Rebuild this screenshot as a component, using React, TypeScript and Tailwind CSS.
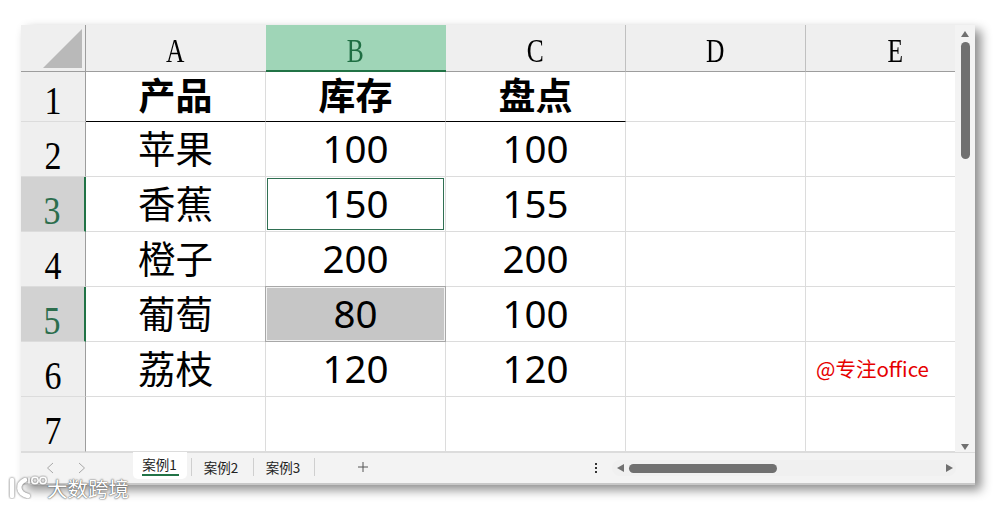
import React from "react";

const cjk = "font-['Noto_Sans_CJK_SC','Noto_Sans',sans-serif]";
const num = "font-['Noto_Sans','Noto_Sans_CJK_SC',sans-serif]";
const serif = "font-['Liberation_Serif','Noto_Serif',serif]";

const cols = ["A", "B", "C", "D", "E"];
const rows: string[][] = [
  ["产品", "库存", "盘点"],
  ["苹果", "100", "100"],
  ["香蕉", "150", "155"],
  ["橙子", "200", "200"],
  ["葡萄", "80", "100"],
  ["荔枝", "120", "120"],
  ["", "", ""],
];
const heights = ["h-[50px]", "h-[55px]", "h-[55px]", "h-[55px]", "h-[55px]", "h-[55px]", "h-[55px]"];

function Cell({ r, c, v }: { r: number; c: number; v: string }) {
  const bold = r === 0;
  const selected = r === 2 && c === 1;
  const gray = r === 4 && c === 1;
  const underline = r === 0 && c < 3;
  const isNum = /^\d+$/.test(v);
  return (
    <div
      className={`w-[180px] shrink-0 border-r border-b border-[#dcdcdc] relative flex items-center justify-center leading-none text-black ${isNum ? `${num} text-[38.5px]` : cjk} ${!isNum && !bold ? "text-[37.5px]" : ""} ${bold ? "font-bold text-[37px]" : ""} ${underline ? "border-b-black" : ""} ${gray ? "bg-[#c6c6c6]" : "bg-white"}`}
    >
      {selected && <div className="absolute inset-x-[1px] inset-y-[1px] border border-[#2f6f52]" />}
      {gray && <div className="absolute -top-[1px] -left-[1px] right-[-1px] bottom-[-1px] border border-[#a8a8a8]" />}
      {gray && <div className="absolute inset-0 border border-[#f2f2f2]" />}
      <span className={`relative ${isNum ? "-mt-[1px]" : "-mt-[5px]"}`}>{v}</span>
    </div>
  );
}

export default function App() {
  return (
    <div className="w-[996px] h-[506px] bg-white pl-[21px] pt-[25px] overflow-hidden relative">
      <div className="w-[954px] h-[460px] bg-[#f3f3f3] flex flex-col shadow-[6px_5px_10px_rgba(0,0,0,0.45)]">
        <div className="flex h-[427px] shrink-0">
          <div className="w-[934px] shrink-0 flex flex-col overflow-hidden">
            <div className="flex h-[47px] shrink-0 bg-[#efefef] border-b border-[#9d9d9d]">
              <div className="w-[65px] shrink-0 border-r border-[#9d9d9d] flex items-end justify-end pr-[3px] pb-[3px]">
                <svg width="39" height="39" viewBox="0 0 39 39">
                  <polygon points="39,0 39,39 0,39" fill="#b9b9b9" />
                </svg>
              </div>
              {cols.map((c, i) => (
                <div
                  key={c}
                  className={`w-[180px] shrink-0 -mb-[1px] flex items-center justify-center pt-[6px] pr-[1px] text-[34px] leading-none ${serif} ${c === "B" ? "bg-[#9fd5b7] border-b-2 border-[#217346] text-[#1f6e43]" : "text-black border-b border-[#9d9d9d]"} ${i > 1 ? "border-r border-r-[#c0c0c0]" : ""}`}
                >
                  <span className="inline-block scale-x-[0.75]">{c}</span>
                </div>
              ))}
            </div>
            {rows.map((row, r) => {
              const active = r === 2 || r === 4;
              return (
                <div key={r} className={`flex shrink-0 ${heights[r]}`}>
                  <div
                    className={`w-[65px] shrink-0 flex items-end justify-center pr-[1px] text-[40px] leading-[44px] border-b border-[#dcdcdc] ${serif} ${active ? "bg-[#d2d2d2] text-[#2c6e4d] border-r-2 border-r-[#217346]" : "bg-[#efefef] text-black border-r border-r-[#9d9d9d]"}`}
                  >
                    <span className="inline-block scale-x-[0.85] translate-y-[2px]">{r + 1}</span>
                  </div>
                  {cols.map((_, c) => (
                    <Cell key={c} r={r} c={c} v={row[c] ?? ""} />
                  ))}
                </div>
              );
            })}
          </div>
          <div className="w-[20px] shrink-0 flex flex-col items-center pt-[6px]">
            <div className="w-0 h-0 border-x-[4px] border-x-transparent border-b-[6px] border-b-[#707070]" />
            <div className="w-[9px] h-[117px] rounded-[5px] bg-[#707070] mt-[5px]" />
            <div className="flex-1" />
            <div className="w-0 h-0 border-x-[4px] border-x-transparent border-t-[6px] border-t-[#707070] mb-[2px]" />
          </div>
        </div>
        <div className="flex-1 flex items-start text-[13.5px] text-[#222] relative border-t border-[#dcdcdc] border-b-2 border-b-[#c8c8c8]">
          <div className="w-[112px] shrink-0 flex items-center pt-[9px] pl-[25px] gap-[24px]">
            <svg width="8" height="12" viewBox="0 0 8 12" fill="none" stroke="#a8a8a8" strokeWidth="1"><path d="M7 1 L1.5 6 L7 11" /></svg>
            <svg width="8" height="12" viewBox="0 0 8 12" fill="none" stroke="#a8a8a8" strokeWidth="1"><path d="M1 1 L6.5 6 L1 11" /></svg>
          </div>
          <div className={`w-[54px] h-[27px] -mt-[1px] shrink-0 bg-white rounded-b-[5px] flex flex-col items-center pt-[3px] ${cjk}`}>
            <span className="leading-[18px] h-[18px] -ml-[1px]">案例1</span>
            <span className="w-[37px] h-[2px] bg-[#217346] mt-[1px]" />
          </div>
          <div className={`w-[62px] shrink-0 h-[18px] mt-[5px] ml-[4px] border-l border-[#cfcfcf] flex items-center justify-center pr-[3px] ${cjk}`}>案例2</div>
          <div className={`w-[62px] shrink-0 h-[18px] mt-[5px] border-x border-[#cfcfcf] flex items-center justify-center pr-[2px] ${cjk}`}>案例3</div>
          <svg className="ml-[42px] mt-[8px]" width="12" height="12" viewBox="0 0 12 12" stroke="#555" strokeWidth="1"><path d="M6 1 V11 M1 6 H11" /></svg>
          <div className="ml-[226px] mt-[10px] flex flex-col gap-[2px]">
            <span className="w-[2px] h-[2px] bg-[#333]" />
            <span className="w-[2px] h-[2px] bg-[#333]" />
            <span className="w-[2px] h-[2px] bg-[#333]" />
          </div>
          <div className="ml-[15px] mt-[7px] w-[344px] h-[16px] rounded-[8px] bg-[#f0f0f0] flex items-center pl-[5px] pr-[3px]">
            <div className="w-0 h-0 border-y-[4px] border-y-transparent border-r-[7px] border-r-[#707070]" />
            <div className="ml-[5px] w-[148px] h-[9px] rounded-[5px] bg-[#707070]" />
            <div className="flex-1" />
            <div className="w-0 h-0 border-y-[4px] border-y-transparent border-l-[7px] border-l-[#707070]" />
          </div>
        </div>
      </div>
      <div className={`absolute left-[816px] top-[355px] text-[20.5px] leading-[26px] text-[#e60000] ${cjk}`}>@专注office</div>
      <div className={`absolute left-[47px] top-[476px] text-[20.5px] leading-[24px] text-white [text-shadow:0_0_2px_#555,0_0_1px_#555] ${cjk}`}>大数跨境</div>
      <svg className="absolute left-[8px] top-[475px]" width="40" height="24" viewBox="0 0 40 24" fill="none" stroke="#fff" strokeLinecap="round">
        <g style={{ filter: "drop-shadow(0 0 1px #555)" }}>
          <path d="M4 5 V21" strokeWidth="4.5" />
          <path d="M17 5 C9 9 9 18 20 21" strokeWidth="4.5" />
          <path d="M21 3 V8" strokeWidth="1.5" />
          <circle cx="27" cy="5.5" r="3.2" strokeWidth="1.5" />
          <circle cx="35" cy="5.5" r="3.2" strokeWidth="1.5" />
        </g>
      </svg>
    </div>
  );
}
